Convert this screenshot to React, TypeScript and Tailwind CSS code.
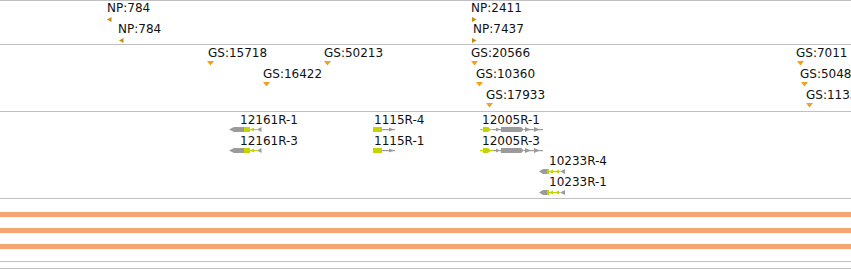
import React from 'react';

// Feature track view: labelled markers and gene models on fixed tracks.

type Dir = 'left' | 'right' | 'down';

interface Marker {
  label: string;
  textX: number;
  textY: number;
  markX: number;
  markY: number;
  dir: Dir;
}

interface Gene {
  label: string;
  textX: number;
  textY: number;
  glyphX: number;
  glyphY: number;
  kind: 'rev' | 'revShort' | 'fwdShort' | 'fwdLong';
}

const GREY = '#9b9b9b';
const LIME = '#c3d500';

const npMarkers: Marker[] = [
  { label: 'NP:784', textX: 107, textY: 0, markX: 107, markY: 16, dir: 'left' },
  { label: 'NP:784', textX: 118, textY: 21, markX: 119, markY: 37, dir: 'left' },
  { label: 'NP:2411', textX: 471, textY: 0, markX: 472, markY: 16, dir: 'right' },
  { label: 'NP:7437', textX: 473, textY: 21, markX: 472, markY: 37, dir: 'right' },
];

const gsMarkers: Marker[] = [
  { label: 'GS:15718', textX: 208, textY: 1, markX: 207, markY: 16, dir: 'down' },
  { label: 'GS:50213', textX: 324, textY: 1, markX: 324, markY: 16, dir: 'down' },
  { label: 'GS:16422', textX: 263, textY: 22, markX: 263, markY: 37, dir: 'down' },
  { label: 'GS:20566', textX: 471, textY: 1, markX: 471, markY: 16, dir: 'down' },
  { label: 'GS:10360', textX: 476, textY: 22, markX: 476, markY: 37, dir: 'down' },
  { label: 'GS:17933', textX: 486, textY: 43, markX: 486, markY: 58, dir: 'down' },
  { label: 'GS:7011', textX: 796, textY: 1, markX: 797, markY: 16, dir: 'down' },
  { label: 'GS:5048', textX: 800, textY: 22, markX: 801, markY: 37, dir: 'down' },
  { label: 'GS:1133', textX: 806, textY: 43, markX: 806, markY: 58, dir: 'down' },
];

const genes: Gene[] = [
  { label: '12161R-1', textX: 240, textY: 1, glyphX: 229, glyphY: 15, kind: 'rev' },
  { label: '12161R-3', textX: 240, textY: 22, glyphX: 229, glyphY: 36, kind: 'rev' },
  { label: '1115R-4', textX: 374, textY: 1, glyphX: 373, glyphY: 15, kind: 'fwdShort' },
  { label: '1115R-1', textX: 374, textY: 22, glyphX: 373, glyphY: 36, kind: 'fwdShort' },
  { label: '12005R-1', textX: 482, textY: 1, glyphX: 480, glyphY: 15, kind: 'fwdLong' },
  { label: '12005R-3', textX: 482, textY: 22, glyphX: 480, glyphY: 36, kind: 'fwdLong' },
  { label: '10233R-4', textX: 549, textY: 42, glyphX: 539, glyphY: 57, kind: 'revShort' },
  { label: '10233R-1', textX: 549, textY: 63, glyphX: 539, glyphY: 78, kind: 'revShort' },
];

const Label: React.FC<{ x: number; y: number; text: string }> = ({ x, y, text }) => (
  <span
    className="absolute whitespace-nowrap text-[12px] leading-[14px] text-[#111111]"
    style={{ left: x, top: y }}
  >
    {text}
  </span>
);

const MarkerIcon: React.FC<{ m: Marker }> = ({ m }) => {
  if (m.dir === 'down') {
    return (
      <svg className="absolute" style={{ left: m.markX, top: m.markY }} width="8" height="5" viewBox="0 0 8 5">
        <polygon points="0,0 7,0 3.5,4.5" fill="#f0a21c" />
      </svg>
    );
  }
  const pts = m.dir === 'left' ? '4.5,0 4.5,5 0,2.5' : '0,0 0,5 4.5,2.5';
  return (
    <svg className="absolute" style={{ left: m.markX, top: m.markY }} width="5" height="5" viewBox="0 0 5 5">
      <polygon points={pts} fill="#c98c05" />
    </svg>
  );
};

const GeneGlyph: React.FC<{ kind: Gene['kind'] }> = ({ kind }) => {
  switch (kind) {
    case 'rev':
      return (
        <svg width="33" height="6" viewBox="0 0 33 6">
          <polygon points="0,2.5 5,0 15,0 15,5 5,5" fill={GREY} />
          <rect x="15" y="0" width="6" height="5" fill={LIME} />
          <rect x="21" y="2" width="7" height="1.2" fill={LIME} />
          <polygon points="21,2.5 25,0.5 25,4.5" fill={LIME} />
          <polygon points="28,2.5 32.5,0 32.5,5" fill={GREY} />
        </svg>
      );
    case 'revShort':
      return (
        <svg width="27" height="6" viewBox="0 0 27 6">
          <polygon points="0,2.5 4,0 8,0 8,5 4,5" fill={GREY} />
          <rect x="8" y="0" width="2" height="5" fill={LIME} />
          <rect x="10" y="2" width="11" height="1.2" fill={LIME} />
          <polygon points="10,2.5 14,0.5 14,4.5" fill={LIME} />
          <polygon points="16,2.5 20,0.5 20,4.5" fill={LIME} />
          <polygon points="21,2.5 26,0 26,5" fill={GREY} />
        </svg>
      );
    case 'fwdShort':
      return (
        <svg width="23" height="6" viewBox="0 0 23 6">
          <rect x="0" y="0" width="9" height="5" fill={LIME} />
          <rect x="9" y="2" width="13" height="1.2" fill={GREY} />
          <polygon points="16,0.5 21,2.5 16,4.5" fill={GREY} />
        </svg>
      );
    default:
      return (
        <svg width="64" height="6" viewBox="0 0 64 6">
          <rect x="0" y="2" width="13" height="1.2" fill={LIME} />
          <polygon points="3,0 8,0 11,2.5 8,5 3,5" fill={LIME} />
          <rect x="13" y="2" width="8" height="1.2" fill={GREY} />
          <polygon points="16,0.5 20,2.5 16,4.5" fill={GREY} />
          <polygon points="21,0 41,0 44,2.5 41,5 21,5" fill={GREY} />
          <rect x="44" y="2" width="19" height="1.2" fill={GREY} />
          <polygon points="45,0 51,2.5 45,5" fill={GREY} />
          <polygon points="54,0 60,2.5 54,5" fill={GREY} />
        </svg>
      );
  }
};

const Rule: React.FC = () => <div className="h-px bg-[#c0c0c0]" />;

export default function App() {
  return (
    <div className="w-[851px] h-[270px] overflow-hidden bg-white flex flex-col font-['DejaVu_Sans',sans-serif]">
      <Rule />

      {/* NP markers */}
      <div className="relative h-[43px]">
        {npMarkers.map((m) => (
          <React.Fragment key={m.label + m.textY}>
            <Label x={m.textX} y={m.textY} text={m.label} />
            <MarkerIcon m={m} />
          </React.Fragment>
        ))}
      </div>
      <Rule />

      {/* GS markers */}
      <div className="relative h-[66px]">
        {gsMarkers.map((m) => (
          <React.Fragment key={m.label}>
            <Label x={m.textX} y={m.textY} text={m.label} />
            <MarkerIcon m={m} />
          </React.Fragment>
        ))}
      </div>
      <Rule />

      {/* Gene models */}
      <div className="relative h-[86px]">
        {genes.map((g) => (
          <React.Fragment key={g.label}>
            <Label x={g.textX} y={g.textY} text={g.label} />
            <div className="absolute flex" style={{ left: g.glyphX, top: g.glyphY }}>
              <GeneGlyph kind={g.kind} />
            </div>
          </React.Fragment>
        ))}
      </div>
      <Rule />

      {/* Coverage bands */}
      <div className="flex flex-col gap-[11px] pt-[13px] pb-[12px]">
        <div className="h-[5px] bg-[#f6a470]" />
        <div className="h-[5px] bg-[#f6a470]" />
        <div className="h-[5px] bg-[#f6a470]" />
      </div>
      <Rule />
      <div className="h-[6px]" />
      <Rule />
    </div>
  );
}
